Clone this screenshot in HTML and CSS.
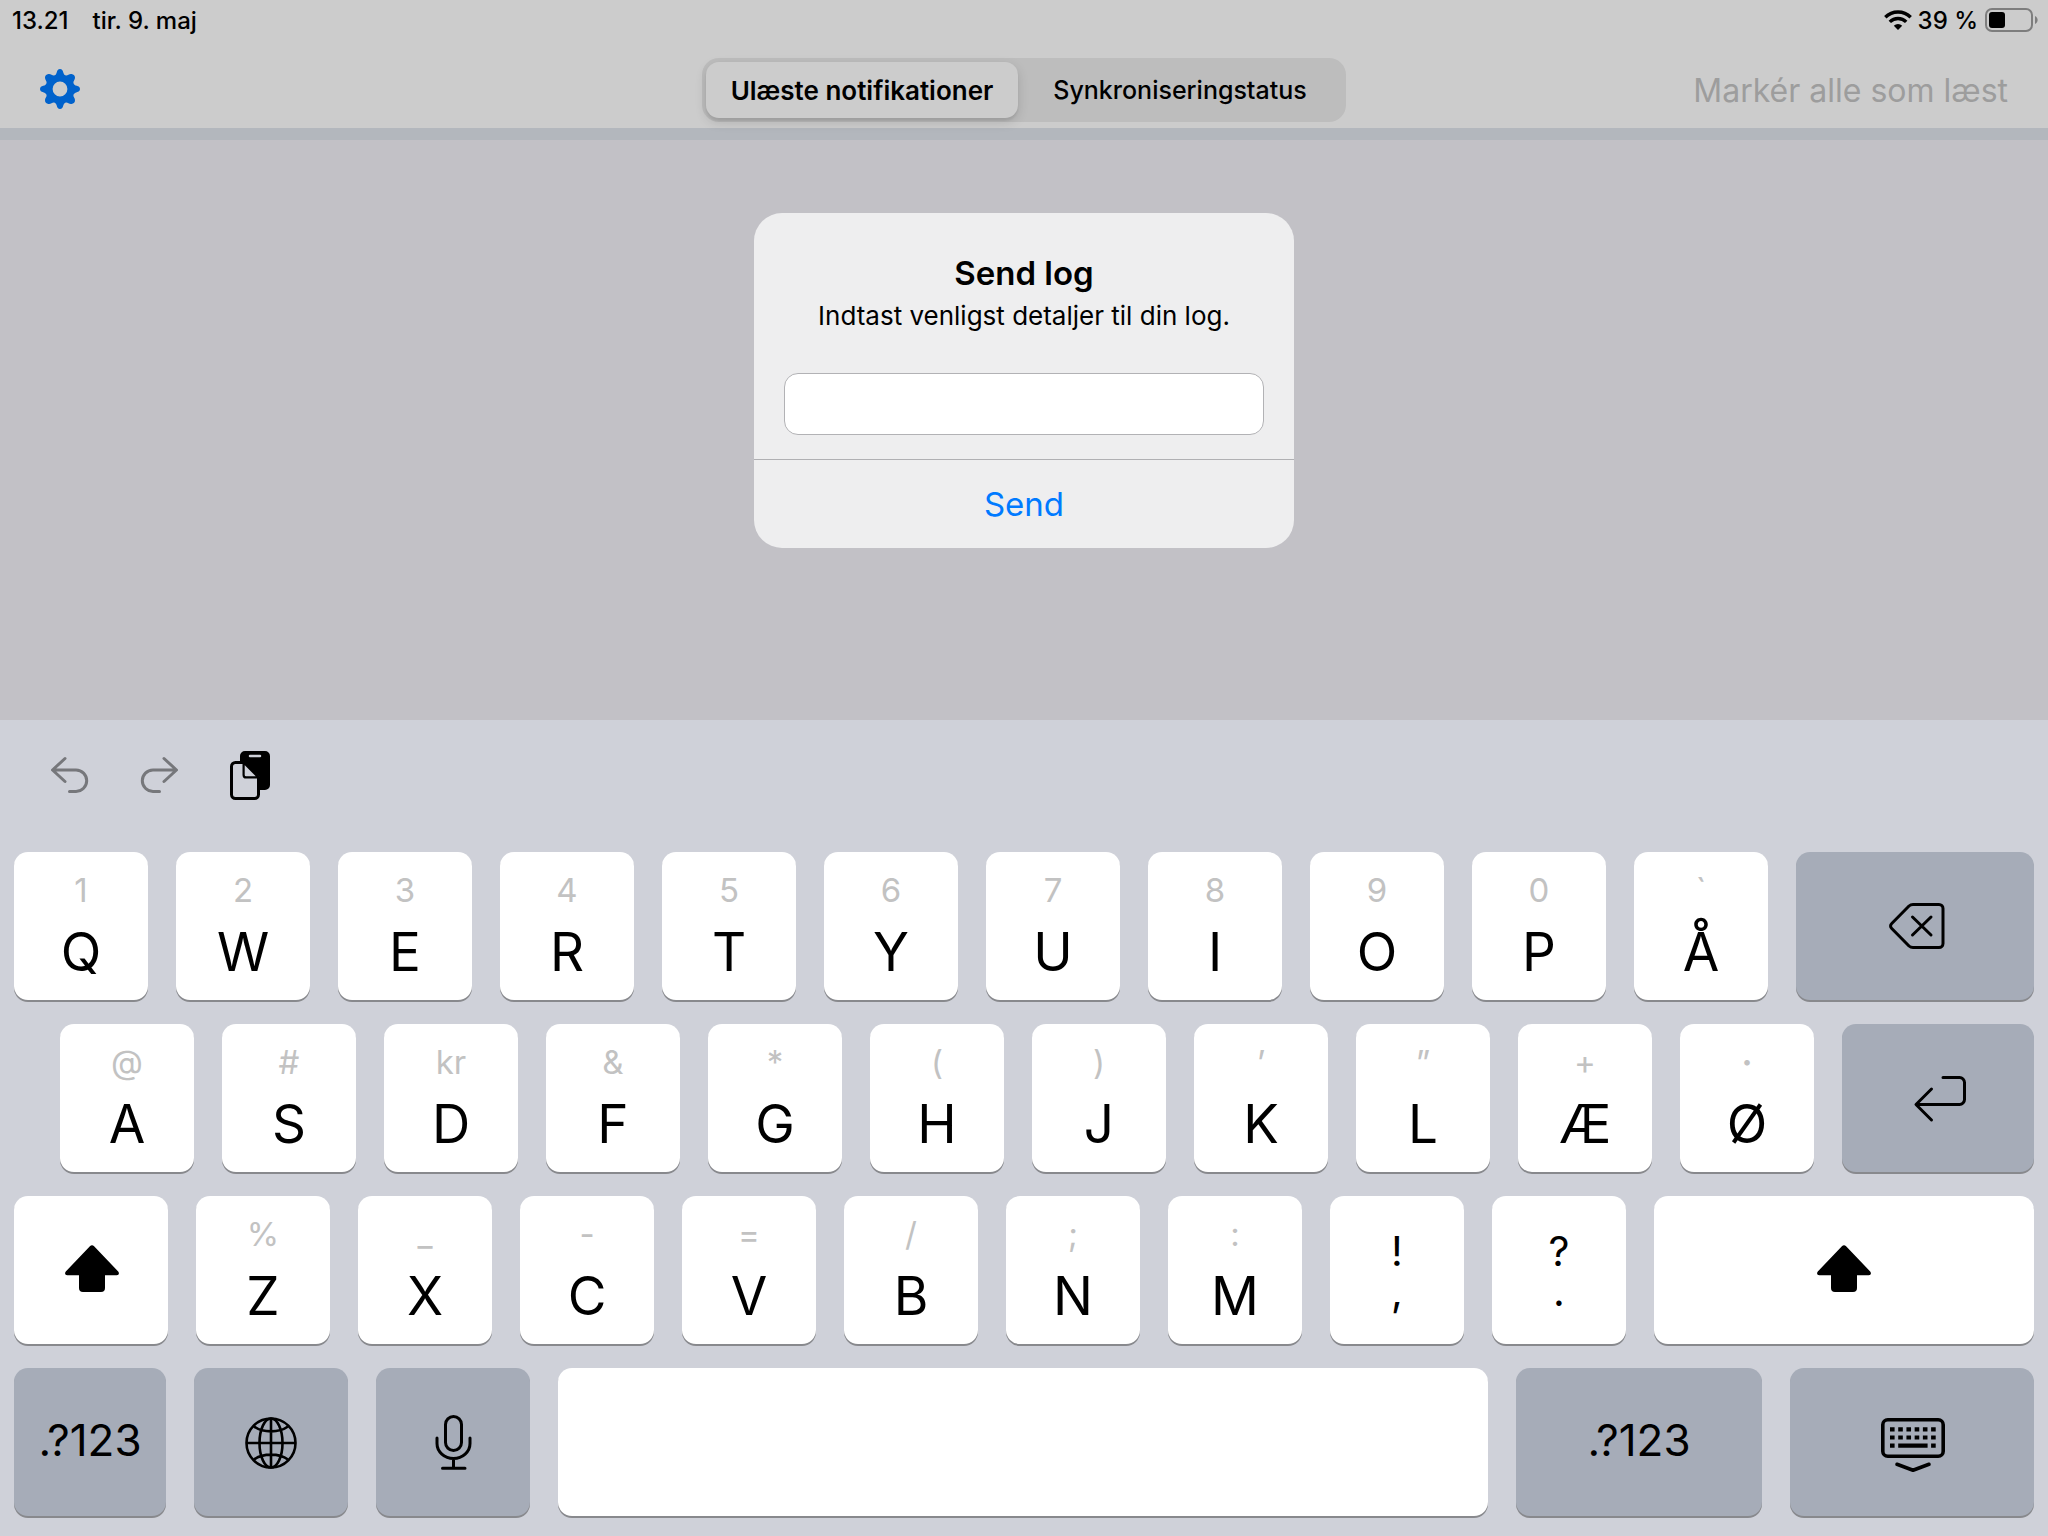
FILE: index.html
```html
<!DOCTYPE html>
<html lang="da">
<head>
<meta charset="utf-8">
<meta name="viewport" content="width=device-width, initial-scale=1">
<title>Notifikationer</title>
<link rel="stylesheet" href="styles.css">
</head>
<body>
<div class="screen">
  <header class="header">
    <div class="status">
      <span class="status-side"><time>13.21</time><span>tir. 9. maj</span></span>
      <span class="status-side status-right">
        <svg width="28" height="20" viewBox="0 0 28 20" aria-hidden="true"><g fill="none" stroke="#000" stroke-width="3.4"><path d="M1.3 7.2A18 18 0 0 1 26.7 7.2"/><path d="M5.8 11.9A11.6 11.6 0 0 1 22.2 11.9"/></g><path d="M14 20l-4.2-4.3a6 6 0 0 1 8.4 0z"/></svg>
        <span>39 %</span>
        <svg width="54" height="24" viewBox="0 0 54 24" aria-hidden="true"><rect x="2" y="1" width="46" height="22" rx="6" fill="none" stroke="#7d7d7d" stroke-width="2"/><rect x="5" y="4" width="16" height="16" rx="3"/><path d="M51 8c3.500 1.500 3.500 6.500 0 8z" fill="#7d7d7d"/></svg>
      </span>
    </div>
    <nav class="nav">
      <button class="icon-button nav-left" aria-label="Indstillinger">
        <svg width="40" height="42" viewBox="0 0 40 42"><path fill="#0062cc" fill-rule="evenodd" d="M20 0c2 0 2.800 1.500 3.200 3.200.5 2 1.500 3.300 3 3.300 1.800 0 3-1.800 5.300-1.500 2.200.3 3.700 1.800 3.500 4-.2 2-1.700 3-1.600 4.700.1 1.600 1.600 2.600 3.400 3.100C38.500 17.300 40 18 40 20s-1.500 2.700-3.200 3.200c-1.800.5-3.300 1.500-3.400 3.100-.1 1.700 1.400 2.700 1.600 4.700.2 2.200-1.300 3.700-3.500 4-2.300.3-3.500-1.500-5.300-1.500-1.500 0-2.500 1.300-3 3.300C22.800 38.500 22 40 20 40s-2.800-1.500-3.200-3.200c-.5-2-1.500-3.300-3-3.300-1.800 0-3 1.800-5.300 1.500-2.200-.3-3.700-1.800-3.500-4 .2-2 1.700-3 1.600-4.700-.1-1.600-1.600-2.600-3.400-3.100C1.500 22.700 0 22 0 20s1.500-2.700 3.200-3.200c1.800-.5 3.300-1.500 3.400-3.100.1-1.700-1.400-2.700-1.600-4.700-.2-2.200 1.300-3.700 3.500-4 2.300-.3 3.500 1.500 5.300 1.500 1.500 0 2.500-1.300 3-3.300C17.200 1.500 18 0 20 0zM20 12.600a7.400 7.400 0 1 0 0 14.800a7.400 7.400 0 1 0 0-14.800z"/></svg>
      </button>
      <div class="segments" role="group" aria-label="Visning">
        <button class="segment segment-active" aria-pressed="true">Ulæste notifikationer</button>
        <button class="segment" aria-pressed="false">Synkroniseringstatus</button>
      </div>
      <button class="mark-read" disabled>Markér alle som læst</button>
    </nav>
  </header>

  <main class="content">
    <form class="dialog" role="dialog" aria-labelledby="dialog-title">
      <div class="dialog-body">
        <h1 class="dialog-title" id="dialog-title">Send log</h1>
        <label class="dialog-text" for="details">Indtast venligst detaljer til din log.</label>
        <input class="dialog-input" id="details" type="text">
      </div>
      <button class="dialog-action" type="button">Send</button>
    </form>
  </main>

  <section class="keyboard" aria-label="Tastatur">
    <div class="toolbar">
      <button class="icon-button" aria-label="Fortryd"><svg width="40" height="50" viewBox="0 0 40 50"><path fill="none" stroke="#76777b" stroke-width="3" stroke-linecap="round" stroke-linejoin="round" d="M15 8.500 2.500 20 15 31.500M3 20h23a10.700 10.700 0 0 1 0 21.400h-6.500"/></svg></button>
      <button class="icon-button" aria-label="Gentag"><svg width="40" height="50" viewBox="0 0 40 50"><path fill="none" stroke="#76777b" stroke-width="3" stroke-linecap="round" stroke-linejoin="round" d="M24 8.500 36.500 20 24 31.500M36 20h-23a10.700 10.700 0 0 0 0 21.400h6.500"/></svg></button>
      <button class="icon-button" aria-label="Sæt ind"><svg width="40" height="50" viewBox="0 0 40 50"><path d="M10 11V6a5 5 0 0 1 5-5h20a5 5 0 0 1 5 5v29a5 5 0 0 1-5 5h-5.500V27L15.500 13.500 13 11z"/><path fill="none" stroke="#cfd1d9" stroke-width="2.500" stroke-linecap="round" d="M20 6h10"/><path fill="#cfd1d9" stroke="#000" stroke-width="3" stroke-linejoin="round" d="M13.500 12.500H5.500a4 4 0 0 0-4 4v28a4 4 0 0 0 4 4h19a4 4 0 0 0 4-4V27.500z"/><path fill="#cfd1d9" stroke="#000" stroke-width="2.200" stroke-linejoin="round" d="M13.600 12.500v12.400a2.500 2.500 0 0 0 2.500 2.500h12.400z"/></svg></button>
    </div>

    <div class="keys">
      <div class="row">
        <button class="key"><span class="hint">1</span><span class="letter">Q</span></button>
        <button class="key"><span class="hint">2</span><span class="letter">W</span></button>
        <button class="key"><span class="hint">3</span><span class="letter">E</span></button>
        <button class="key"><span class="hint">4</span><span class="letter">R</span></button>
        <button class="key"><span class="hint">5</span><span class="letter">T</span></button>
        <button class="key"><span class="hint">6</span><span class="letter">Y</span></button>
        <button class="key"><span class="hint">7</span><span class="letter">U</span></button>
        <button class="key"><span class="hint">8</span><span class="letter">I</span></button>
        <button class="key"><span class="hint">9</span><span class="letter">O</span></button>
        <button class="key"><span class="hint">0</span><span class="letter">P</span></button>
        <button class="key"><span class="hint">`</span><span class="letter">Å</span></button>
        <button class="key key-dark key-delete" aria-label="Slet"><svg width="60" height="50" viewBox="-2 -1 60 50"><path fill="none" stroke="#000" stroke-width="3" stroke-linecap="round" stroke-linejoin="round" d="M26 2.500H52a4 4 0 0 1 4 4v35a4 4 0 0 1-4 4H26a6 6 0 0 1-4-1.500L4.500 26.200a3 3 0 0 1 0-4.400L22 4a6 6 0 0 1 4-1.500zM25.500 15l18.500 18M44 15 25.500 33"/></svg></button>
      </div>
      <div class="row row-indent">
        <button class="key"><span class="hint">@</span><span class="letter">A</span></button>
        <button class="key"><span class="hint">#</span><span class="letter">S</span></button>
        <button class="key"><span class="hint">kr</span><span class="letter">D</span></button>
        <button class="key"><span class="hint">&amp;</span><span class="letter">F</span></button>
        <button class="key"><span class="hint">*</span><span class="letter">G</span></button>
        <button class="key"><span class="hint">(</span><span class="letter">H</span></button>
        <button class="key"><span class="hint">)</span><span class="letter">J</span></button>
        <button class="key"><span class="hint">’</span><span class="letter">K</span></button>
        <button class="key"><span class="hint">”</span><span class="letter">L</span></button>
        <button class="key"><span class="hint">+</span><span class="letter">Æ</span></button>
        <button class="key"><span class="hint hint-dot">·</span><span class="letter">Ø</span></button>
        <button class="key key-dark key-return" aria-label="Retur"><svg width="60" height="50" viewBox="-2 0 60 50"><path fill="none" stroke="#000" stroke-width="3" stroke-linecap="round" stroke-linejoin="round" d="M21.500 16 6 31.500 21.500 47M6.500 31.500h43a5 5 0 0 0 5-5v-17a5 5 0 0 0-5-5H33"/></svg></button>
      </div>
      <div class="row">
        <button class="key key-wide" aria-label="Skift"><svg width="56" height="50" viewBox="0 0 56 50"><path d="M26.900 1.200a3.200 3.200 0 0 1 4.200 0L55.200 26.500c1.500 1.900.5 3.800-1.500 3.800H42V43a4 4 0 0 1-4 4H20a4 4 0 0 1-4-4V30.300H4.300c-2 0-3-1.900-1.500-3.800z"/></svg></button>
        <button class="key"><span class="hint">%</span><span class="letter">Z</span></button>
        <button class="key"><span class="hint">_</span><span class="letter">X</span></button>
        <button class="key"><span class="hint">-</span><span class="letter">C</span></button>
        <button class="key"><span class="hint">=</span><span class="letter">V</span></button>
        <button class="key"><span class="hint">/</span><span class="letter">B</span></button>
        <button class="key"><span class="hint">;</span><span class="letter">N</span></button>
        <button class="key"><span class="hint">:</span><span class="letter">M</span></button>
        <button class="key"><span class="marks">!<br>,</span></button>
        <button class="key"><span class="marks">?<br>.</span></button>
        <button class="key key-shift" aria-label="Skift"><svg width="56" height="50" viewBox="1 0 56 50"><path d="M26.900 1.200a3.200 3.200 0 0 1 4.200 0L55.200 26.500c1.500 1.900.5 3.800-1.500 3.800H42V43a4 4 0 0 1-4 4H20a4 4 0 0 1-4-4V30.300H4.300c-2 0-3-1.900-1.500-3.800z"/></svg></button>
      </div>
      <div class="row">
        <button class="key key-dark key-mode">.?123</button>
        <button class="key key-dark key-wide" aria-label="Skift sprog"><svg width="54" height="54" viewBox="0 -1 54 54"><g fill="none" stroke="#000" stroke-width="2.600"><circle cx="27" cy="27" r="24.500"/><ellipse cx="27" cy="27" rx="11.500" ry="24.500"/><path d="M27 2.500v49M2.500 27h49M10 10.500c9 6.500 25 6.500 34 0M10 43.500c9-6.500 25-6.500 34 0"/></g></svg></button>
        <button class="key key-dark key-wide" aria-label="Diktering"><svg width="40" height="58" viewBox="0 -1 40 58"><g fill="none" stroke="#000" stroke-width="3" stroke-linecap="round"><rect x="12.500" y="2.500" width="16" height="34" rx="8"/><path d="M4 24v5.500a16.500 15 0 0 0 33 0V24M20.500 45v9M9.500 54.200h22.500"/></g></svg></button>
        <button class="key key-space" aria-label="Mellemrum"></button>
        <button class="key key-dark key-mode-wide">.?123</button>
        <button class="key key-dark key-hide" aria-label="Skjul tastatur"><svg width="66" height="62" viewBox="0 0 66 62"><rect x="3.800" y="8.800" width="60.400" height="36.400" rx="5" fill="none" stroke="#000" stroke-width="3.600"/><g fill="none" stroke="#000" stroke-width="4.200"><path stroke-dasharray="4.600 3.620" d="M11 18.300h46"/><path stroke-dasharray="4.600 3.620" d="M11 26.500h46"/><path d="M11 34.700h4.600M19.200 34.700h29.400M52.100 34.700h4.600"/></g><path fill="none" stroke="#000" stroke-width="3.600" stroke-linecap="round" stroke-linejoin="round" d="M18 53.300l16 6 16-6"/></svg></button>
      </div>
    </div>
  </section>
</div>
</body>
</html>
```
FILE: styles.css
```css
* {
  box-sizing: border-box;
}

body {
  margin: 0;
  background: #c2c1c6;
  color: #000;
  font-family: Inter, "Liberation Sans", sans-serif;
}

button {
  margin: 0;
  padding: 0;
  border: 0;
  background: none;
  color: inherit;
  font: inherit;
}

svg {
  display: block;
}

.screen {
  display: flex;
  flex-direction: column;
  min-height: 100vh;
}

/* Status bar and navigation */
.header {
  background: #ccc;
  border-bottom: 12px solid #b3b7bd;
}

.status {
  display: flex;
  justify-content: space-between;
  height: 40px;
  padding: 0 10px 0 12px;
  font-size: 24px;
  font-weight: 500;
}

.status-side {
  display: flex;
  align-items: center;
  gap: 24px;
}

.status-right {
  gap: 6px;
}

.nav {
  display: grid;
  grid-template-columns: 1fr 644px 1fr;
  align-items: center;
  height: 88px;
  padding: 12px 40px 0;
}

.icon-button {
  display: flex;
  flex: none;
}

.nav-left {
  justify-self: start;
}

.segments {
  display: flex;
  height: 64px;
  padding: 4px;
  border-radius: 17px;
  background: #bdbdbd;
}

.segment {
  flex: 324 1 0;
  border-radius: 13px;
  font-size: 25px;
  font-weight: 500;
}

.segment-active {
  flex-grow: 312;
  background: #ccc;
  box-shadow: 0 4px 12px rgba(0, 0, 0, 0.14), 0 3px 2px rgba(0, 0, 0, 0.06);
  font-size: 26px;
  font-weight: 600;
}

.mark-read {
  justify-self: end;
  color: #9d9d9d;
  font-size: 32px;
}

/* Alert */
.content {
  display: flex;
  flex: 1;
  justify-content: center;
  align-items: flex-start;
  padding: 73px 24px 80px;
}

.dialog {
  width: 540px;
  overflow: hidden;
  border-radius: 28px;
  background: #eeeeef;
  text-align: center;
}

.dialog-body {
  display: flex;
  flex-direction: column;
  padding: 40px 30px 24px;
}

.dialog-title {
  margin: 0;
  font-size: 33px;
  font-weight: 600;
  line-height: 40px;
}

.dialog-text {
  font-size: 26px;
  line-height: 46px;
}

.dialog-input {
  height: 62px;
  margin-top: 34px;
  padding: 0 14px;
  border: 1px solid #b2b2b5;
  border-radius: 14px;
  background: #fff;
  font: inherit;
  font-size: 26px;
}

.dialog-action {
  width: 100%;
  height: 89px;
  border-top: 1px solid #b0b0b3;
  color: #007aff;
  font-size: 33px;
}

/* Keyboard */
.keyboard {
  padding: 0 14px 20px;
  background: #cfd1d9;
}

.toolbar {
  display: flex;
  align-items: center;
  gap: 50px;
  height: 110px;
  margin-bottom: 22px;
  padding-left: 36px;
}

.keys {
  display: flex;
  flex-direction: column;
  gap: 24px;
}

.row {
  display: flex;
  gap: 28px;
}

.row-indent {
  padding-left: 46px;
}

.key {
  display: flex;
  flex: 134 1 0;
  flex-direction: column;
  align-items: center;
  justify-content: center;
  min-width: 0;
  height: 148px;
  border-radius: 14px;
  background: #fff;
  box-shadow: 0 2px 0 #88898d;
}

.key-dark {
  background: #a6acb8;
}

.key-wide {
  flex-grow: 154;
}

.key-delete {
  flex-grow: 238;
}

.key-return {
  flex-grow: 192;
}

.key-shift {
  flex-grow: 380;
}

.key-space {
  flex-grow: 930;
}

.key-hide {
  flex-grow: 244;
}

.key-mode {
  flex-grow: 152;
}

.key-mode-wide {
  flex-grow: 246;
}

.key-mode,
.key-mode-wide {
  padding-bottom: 4px;
  font-size: 44px;
}

.hint {
  margin-top: 2px;
  color: #c2c2c2;
  font-size: 33px;
  line-height: 40px;
}

.hint-dot {
  font-weight: 700;
}

.letter {
  margin-top: 10px;
  font-size: 53px;
  line-height: 64px;
}

.marks {
  padding-top: 2px;
  font-size: 41px;
  line-height: 40px;
}
```
